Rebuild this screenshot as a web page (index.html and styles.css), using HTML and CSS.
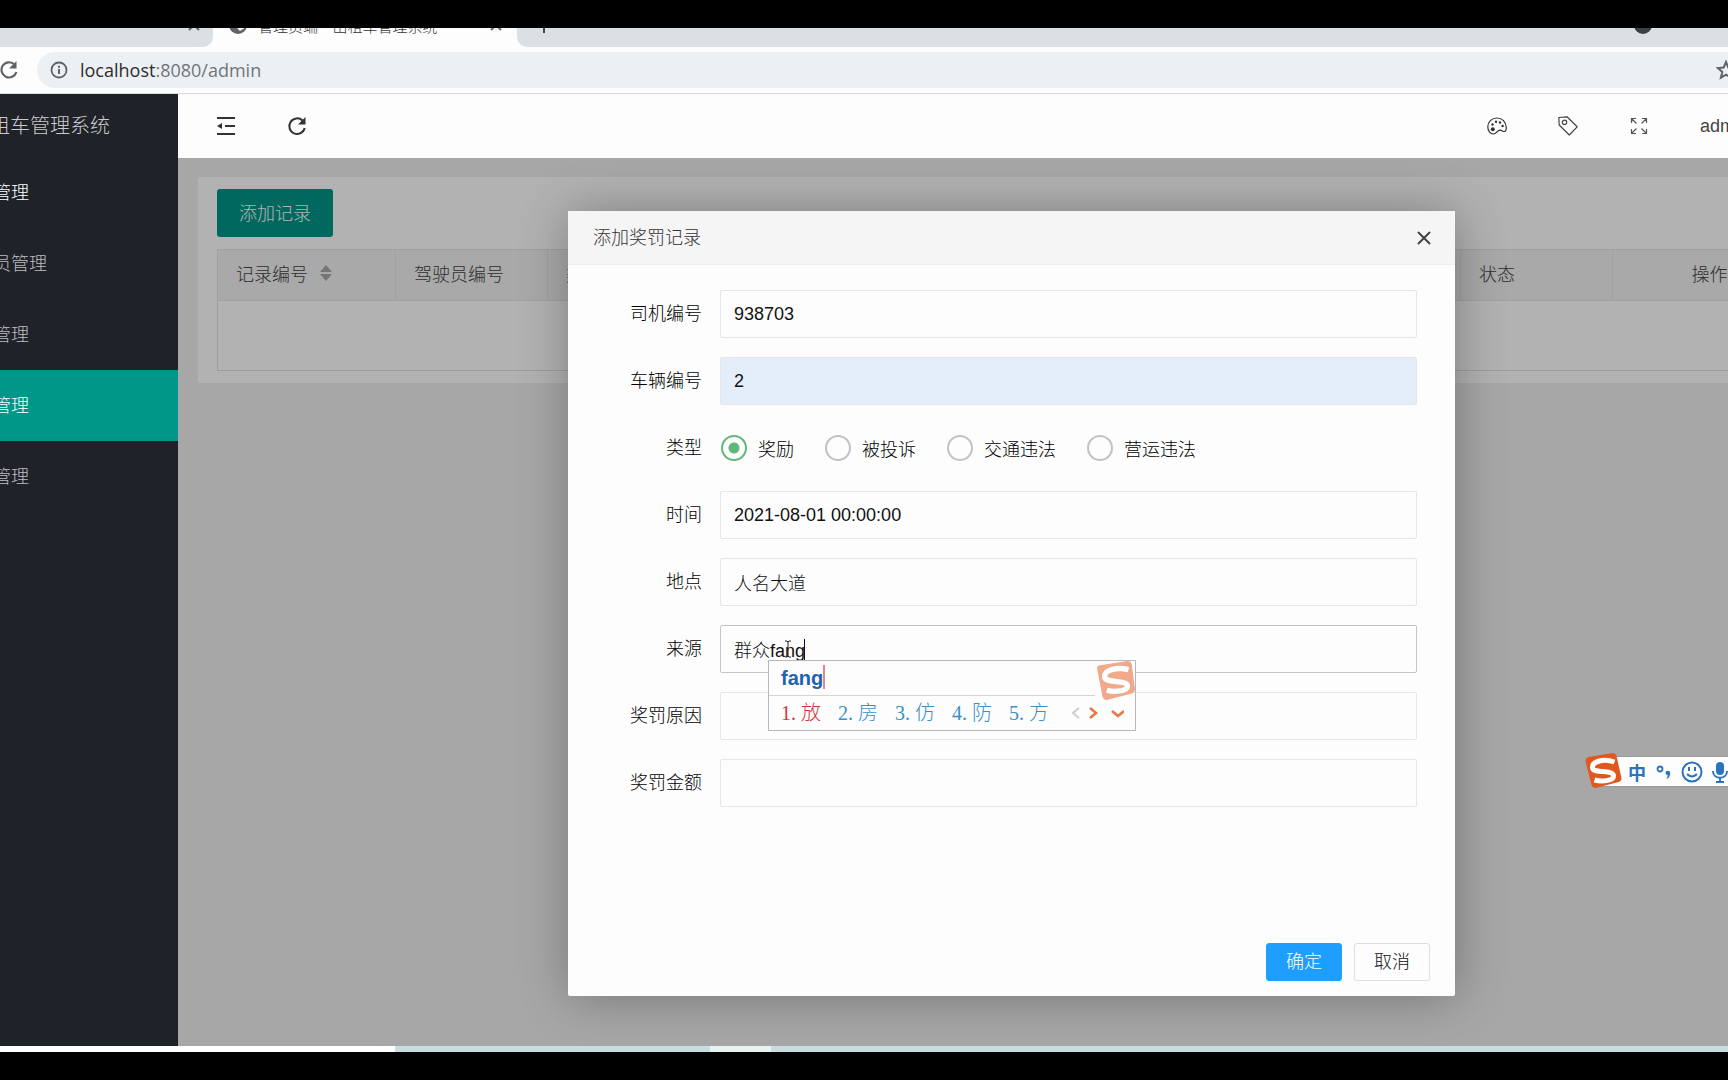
FILE: index.html
```html
<!DOCTYPE html>
<html lang="zh-CN">
<head>
<meta charset="utf-8">
<title>出租车管理系统</title>
<link rel="stylesheet" href="styles.css">
</head>
<body>
<div class="screen">
  <div class="tabstrip">
    <div class="tab tab-idle"><svg class="tab-x" viewBox="0 0 12 12"><path d="M1 1l10 10M11 1L1 11"/></svg></div>
    <div class="tab tab-current">
      <svg class="globe" viewBox="0 0 18 18"><circle cx="9" cy="9" r="9" fill="#5f6368"/><path d="M9 3l1 4 5 1 2 3-6 4-2-2-2-4z" fill="#fdfdfd"/></svg>
      <span class="tab-title">管理员端 – 出租车管理系统</span>
      <svg class="tab-x" viewBox="0 0 12 12"><path d="M1 1l10 10M11 1L1 11"/></svg>
    </div>
    <div class="tab tab-rest">
      <svg class="plus" viewBox="0 0 14 14"><path d="M7 0v14M0 7h14"/></svg>
      <span class="profile"></span>
    </div>
  </div>
  <div class="toolbar">
    <svg class="reload" viewBox="0 0 20 20"><path d="M15.5 4.5A7.600 7.600 0 1 0 17.400 12" fill="none" stroke="#5f6368" stroke-width="2.200"/><path d="M17.500 1v7.500H10z" fill="#5f6368"/></svg>
    <div class="omnibox">
      <svg class="info" viewBox="0 0 18 18"><circle cx="9" cy="9" r="7.500" fill="none" stroke="#5f6368" stroke-width="1.800"/><path d="M9 8v5M9 4.700v2" stroke="#5f6368" stroke-width="2"/></svg>
      <span class="url"><span class="host">localhost</span>:8080/admin</span>
      <svg class="star" viewBox="0 0 20 20"><path d="M10 2l2.300 5.500 5.900.5-4.500 3.900 1.400 5.800L10 14.600l-5.100 3.100 1.400-5.800L1.800 8l5.900-.5z"/></svg>
    </div>
  </div>
  <div class="app">
    <nav class="side">
      <div class="brand">租车管理系统</div>
      <a class="nav-item strong" href="#">管理</a>
      <a class="nav-item" href="#">员管理</a>
      <a class="nav-item" href="#">管理</a>
      <a class="nav-item current" href="#">管理</a>
      <a class="nav-item" href="#">管理</a>
    </nav>
    <div class="content">
      <header class="head">
        <button class="head-btn" aria-label="menu"><svg viewBox="0 0 20 20"><path d="M1 2h18M9 10h10M1 18h18" stroke="#333" stroke-width="2"/><path d="M1 10l5-3v6z" fill="#333"/></svg></button>
        <button class="head-btn" aria-label="refresh"><svg viewBox="0 0 20 20"><path d="M15.500 4.500A7.800 7.800 0 1 0 17.700 12" fill="none" stroke="#333" stroke-width="2"/><path d="M18.500 1v7.500H11z" fill="#333"/></svg></button>
        <span class="grow"></span>
        <button class="head-btn" aria-label="theme"><svg viewBox="0 0 20 20"><path d="M10 2C4.500 2 .8 6 .8 10.800c0 4 2.400 7.200 5.700 7.200 3.200 0 3.300-3.800 6.700-3.800 2 0 2.300 1.300 3.900 1.300 1.700 0 2.300-2 2.200-4.200C19 6 15.200 2 10 2z" fill="none" stroke="#333" stroke-width="1.200"/><circle cx="5.800" cy="13.300" r="2" fill="#333"/><g fill="#333"><circle cx="5.500" cy="8.500" r="1.200"/><circle cx="9" cy="5.800" r="1.200"/><circle cx="13" cy="6.500" r="1.200"/><circle cx="15.600" cy="10" r="1.200"/></g></svg></button>
        <button class="head-btn" aria-label="note"><svg viewBox="0 0 20 20"><path d="M.8 1.500L9 .8l10.200 10L11.300 19 1.200 9z" fill="none" stroke="#444" stroke-width="1.200" stroke-linejoin="round"/><circle cx="6.500" cy="6.300" r="2.200" fill="none" stroke="#444" stroke-width="1.200"/></svg></button>
        <button class="head-btn" aria-label="fullscreen"><svg viewBox="0 0 20 20" fill="none" stroke="#555" stroke-width="1.200"><path d="M2.500 7V2.500H7M2.500 2.500l5 5M13 2.500h4.500V7M17.500 2.500l-5 5M2.500 13v4.500H7M2.500 17.500l5-5M17.500 13v4.500H13M17.500 17.500l-5-5"/></svg></button>
        <a class="user" href="#">admin</a>
      </header>
      <main class="stage">
        <section class="card">
          <button class="add">添加记录</button>
          <table class="grid">
            <colgroup><col class="c-id"><col class="c-n"><col class="c-n"><col><col class="c-n"><col class="c-op"></colgroup>
            <thead><tr>
              <th><span class="sortable">记录编号<svg class="sort" viewBox="0 0 12 16"><path d="M0 7l6-7 6 7zM0 9l6 7 6-7z"/></svg></span></th>
              <th>驾驶员编号</th><th>类型</th><th></th><th>状态</th><th class="mid">操作</th>
            </tr></thead>
            <tbody><tr><td colspan="6"></td></tr></tbody>
          </table>
        </section>
        <div class="shade">
          <form class="dialog" role="dialog" aria-label="添加奖罚记录">
            <div class="dialog-head"><span>添加奖罚记录</span>
              <button type="button" class="close" aria-label="close"><svg viewBox="0 0 16 16"><path d="M2 2l12 12M14 2L2 14"/></svg></button></div>
            <div class="fields">
              <div class="field"><label for="driver">司机编号</label><input class="text" id="driver" value="938703"></div>
              <div class="field"><label for="car">车辆编号</label><input class="text filled" id="car" value="2"></div>
              <div class="field"><span class="label">类型</span>
                <div class="radios">
                  <label class="opt"><input type="radio" name="kind" checked>奖励</label>
                  <label class="opt"><input type="radio" name="kind">被投诉</label>
                  <label class="opt"><input type="radio" name="kind">交通违法</label>
                  <label class="opt"><input type="radio" name="kind">营运违法</label>
                </div></div>
              <div class="field"><label for="time">时间</label><input class="text" id="time" value="2021-08-01 00:00:00"></div>
              <div class="field"><label for="place">地点</label><input class="text" id="place" value="人名大道"></div>
              <div class="field"><label for="source">来源</label>
                <div class="typing"><input class="text focused" id="source" value="群众fang">
                  <span class="caret"></span>
                  <svg class="ibeam" viewBox="0 0 8 18"><path d="M1 1h2l1 1 1-1h2M4 2v14M1 17h2l1-1 1 1h2"/></svg>
                  <div class="ime">
                    <div class="ime-input"><span class="ime-text">fang</span></div>
                    <div class="ime-list">
                      <span class="cand first"><span class="num">1.</span>放</span><span class="cand"><span class="num">2.</span>房</span><span class="cand"><span class="num">3.</span>仿</span><span class="cand"><span class="num">4.</span>防</span><span class="cand"><span class="num">5.</span>方</span>
                      <svg class="arrows" viewBox="0 0 54 14" fill="none" stroke-width="2.600"><path d="M9 2L3 7l6 5" stroke="#ccc" stroke-width="2"/><path d="M20 2l6 5-6 5M42 5l6 5 6-5" stroke="#e27a45"/></svg>
                    </div>
                    <svg class="ime-logo" viewBox="0 0 36 36"><path d="M1 7Q1 4 4 4L29 0q3 0 4 3l3 23q0 3-3 4L10 36q-3 0-4-3z" fill="#f0a98b"/><path d="M30 8C18 5 7 9 8 15c1 6 21 2 21 8 0 5-12 6-19 4" fill="none" stroke="#fff" stroke-width="5"/></svg>
                  </div>
                </div></div>
              <div class="field"><label for="reason">奖罚原因</label><input class="text" id="reason"></div>
              <div class="field"><label for="amount">奖罚金额</label><input class="text" id="amount"></div>
            </div>
            <div class="actions"><button type="button" class="btn primary">确定</button><button type="button" class="btn">取消</button></div>
          </form>
        </div>
        <div class="langbar">
          <svg class="lang-logo" viewBox="0 0 36 36"><path d="M0 8Q0 5 3 4L27 0q3 0 4 3l5 22q0 3-3 4L10 35q-3 0-4-3z" fill="#e2571e"/><path d="M29 9C17 5 6 9 7 15c1 6 21 1 21 8 0 5-12 6-19 4" fill="none" stroke="#fff" stroke-width="5"/></svg>
          <span class="zh">中</span>
          <svg class="punct" viewBox="0 0 16 16"><circle cx="4" cy="5" r="2.500" fill="none" stroke="#2b74bd" stroke-width="1.800"/><path d="M9.500 9a2.300 2.300 0 1 1 4.700 0c0 3-1.500 5.500-4 6 1-1.200 1.500-2.500 1.500-4C10.500 11 9.500 10 9.500 9z" fill="#2b74bd"/></svg>
          <svg class="smile" viewBox="0 0 22 22" fill="none" stroke="#2b74bd" stroke-width="2"><circle cx="11" cy="11" r="9.500"/><path d="M8 6v4M14 6v4M6 13q5 5 10 0"/></svg>
          <svg class="mic" viewBox="0 0 16 22"><rect x="4" y="1" width="8" height="13" rx="4" fill="#2b74bd"/><path d="M1 10c0 9 14 9 14 0M8 17v4M4 21h8" fill="none" stroke="#2b74bd" stroke-width="2"/></svg>
        </div>
      </main>
    </div>
  </div>
  <div class="taskbar"><span class="task-search"></span><span class="task-gap"></span><span class="task-on"></span></div>
</div>
</body>
</html>
```
FILE: styles.css
```css
* { box-sizing: border-box; }
body {
  margin: 0;
  background: #000;
  color: #000;
  font-family: "Liberation Sans", "Noto Sans CJK SC", sans-serif;
  font-size: 18px;
  font-weight: 300;
}
button, input { font: inherit; color: inherit; margin: 0; }
svg { display: block; flex: none; }
.screen {
  display: flex;
  flex-direction: column;
  height: 100vh;
  padding: 28px 0;
  overflow: hidden;
}

/* browser frame */
.tabstrip { display: flex; height: 19px; overflow: hidden; background: #fdfdfd; }
.tab { display: flex; height: 19px; align-items: flex-start; overflow: hidden; }
.tab-idle { width: 213px; background: #dbe0e5; border-bottom-right-radius: 10px; justify-content: flex-end; padding-right: 13px; }
.tab-current { width: 304px; padding: 0 15px 0 16px; gap: 11px; }
.tab-rest { flex: 1; background: #dbe0e5; border-bottom-left-radius: 10px; padding-left: 20px; justify-content: space-between; }
.tab-x { width: 12px; height: 12px; margin-top: -9px; fill: none; stroke: #5f6368; stroke-width: 2; }
.tab-current .tab-x { margin-left: auto; }
.globe { width: 18px; height: 18px; margin-top: -12px; }
.tab-title { font-family: "Noto Sans CJK SC", sans-serif; font-size: 15px; line-height: 20px; margin-top: -12px; color: #333; white-space: pre; }
.plus { width: 14px; height: 14px; margin-top: -9px; fill: none; stroke: #444; stroke-width: 2; }
.profile { width: 18px; height: 18px; margin: -12px 76px 0 0; border-radius: 50%; background: #3c4046; }
.toolbar { display: flex; align-items: center; height: 47px; padding-bottom: 1px; gap: 18px; background: #fdfdfd; border-bottom: 1px solid #d9dadd; }
.reload { width: 20px; height: 20px; margin-left: -1px; }
.omnibox { flex: 1; display: flex; align-items: center; height: 36px; padding-left: 13px; background: #edf0f2; border-radius: 18px 0 0 18px; overflow: hidden; }
.info { width: 18px; height: 18px; margin-right: 12px; }
.url { flex: 1; font-family: "Open Sans", sans-serif; font-size: 18px; font-weight: 400; color: #70757a; }
.host { color: #2a2d31; }
.star { width: 20px; height: 20px; margin-right: -8px; fill: none; stroke: #5f6368; stroke-width: 2; }

/* application */
.app { flex: 1; display: flex; min-height: 0; }
.side { width: 178px; background: #20222a; overflow: hidden; }
.brand { height: 63px; line-height: 64px; font-size: 20px; margin-left: -10px; color: #ccc; }
.nav-item { display: block; height: 71px; line-height: 72px; text-indent: -7px; color: #bcbdbf; text-decoration: none; }
.nav-item.strong { color: #fff; }
.nav-item.current { background: #009688; color: #fff; }
.content { flex: 1; display: flex; flex-direction: column; min-width: 0; overflow: hidden; }
.head { display: flex; align-items: center; height: 64px; padding-left: 12px; background: #fdfdfd; }
.head-btn { display: flex; align-items: center; justify-content: center; width: 71px; height: 62px; padding: 0; border: 0; background: none; }
.head-btn svg { width: 20px; height: 20px; }
.grow { flex: 1; }
.user { width: 54px; padding-left: 26px; color: #444; text-decoration: none; font-weight: 400; }
.stage { position: relative; flex: 1; background: #f0f0f0; padding: 19px 0 0 20px; overflow: hidden; }
.card { height: 206px; padding: 12px 0 0 19px; background: #fff; border-radius: 3px 0 0 3px; }
.add { display: block; width: 116px; height: 48px; padding: 0 0 3px; border: 0; border-radius: 3px; background: #009688; color: #fff; }
.grid { width: 1590px; margin-top: 12px; table-layout: fixed; border-collapse: collapse; border: 1px solid #e0e0e0; }
.c-id { width: 178px; }
.c-n { width: 152px; }
.c-op { width: 194px; }
.grid th { height: 51px; padding: 0 18px 4px; text-align: left; font-weight: 300; color: #444; background: #f2f2f2; border: 1px solid #e6e6e6; white-space: nowrap; }
.grid .mid { text-align: center; }
.grid td { height: 70px; padding: 0; }
.sortable { display: flex; align-items: center; gap: 12px; }
.sort { width: 12px; height: 16px; fill: #a8a8a8; }

/* dialog */
.shade { position: absolute; inset: 0; padding: 53px 273px 50px 390px; background: rgba(0, 0, 0, .3); }
.dialog { display: flex; flex-direction: column; height: 100%; background: #fdfdfd; border-radius: 2px; box-shadow: 1px 1px 50px rgba(0, 0, 0, .3); }
.dialog-head { display: flex; align-items: center; justify-content: space-between; height: 54px; padding: 0 23px 3px 25px; background: #f5f5f6; border-bottom: 1px solid #eee; color: #333; }
.close { padding: 3px 0 0; border: 0; background: none; }
.close svg { width: 16px; height: 16px; fill: none; stroke: #444; stroke-width: 2; }
.fields { flex: 1; display: flex; flex-direction: column; gap: 19px; padding: 25px 38px 0 0; }
.field { display: flex; align-items: center; height: 48px; }
.field > label, .label { width: 152px; padding: 0 18px 4px 0; text-align: right; }
.text { flex: 1; width: 100%; height: 48px; padding: 0 13px; border: 1px solid #e6e6e6; border-radius: 2px; background: #fdfdfd; color: #111; outline: 0; }
.filled { background: #e4eefb; }
.focused { border-color: #c4c4c4; }
.radios { display: flex; gap: 31px; padding-left: 1px; }
.opt { display: flex; align-items: center; gap: 11px; }
.opt input { appearance: none; width: 26px; height: 26px; border: 2px solid #c2c2c2; border-radius: 50%; }
.opt input:checked { border-color: #5fb878; background: radial-gradient(circle, #5fb878 5px, #fdfdfd 6px); }
.actions { display: flex; justify-content: flex-end; gap: 12px; padding: 0 25px 15px; }
.btn { width: 76px; height: 38px; padding: 0 0 4px; border: 1px solid #dedede; border-radius: 3px; background: #fdfdfd; color: #111; }
.primary { border-color: #1e9fff; background: #1e9fff; color: #fff; }

/* input method window */
.typing { position: relative; flex: 1; display: flex; }
.caret { position: absolute; left: 84px; top: 14px; width: 1px; height: 21px; background: #111; }
.ibeam { position: absolute; left: 64px; top: 15px; width: 8px; height: 18px; fill: none; stroke: #222; }
.ime { position: absolute; z-index: 1; left: 48px; top: 35px; width: 368px; height: 71px; background: #fdfdfd; border: 1px solid #b5b8bd; }
.ime-input { height: 35px; margin-right: 40px; padding: 4px 12px; border-bottom: 1px solid #d5d5d5; }
.ime-text { display: inline-block; height: 24px; line-height: 26px; font-size: 20px; font-weight: 700; color: #1f62b3; border-right: 2px solid #e08a8a; }
.ime-list { display: flex; align-items: center; gap: 17px; height: 34px; padding-left: 12px; font-family: "Liberation Serif", "Noto Sans CJK SC", serif; font-size: 20px; color: #3b8fc6; }
.cand { display: flex; line-height: 28px; }
.num { width: 20px; }
.first { color: #d8323c; }
.arrows { width: 54px; height: 14px; margin-left: 4px; }
.ime-logo { position: absolute; right: 0; top: 0; width: 39px; height: 39px; }

/* language bar */
.langbar { position: absolute; right: 0; top: 598px; width: 128px; height: 31px; display: flex; align-items: center; padding-left: 27px; background: #fdfdfd; border: 1px solid #999; border-right: 0; color: #2b74bd; }
.lang-logo { position: absolute; left: -16px; top: -4px; width: 37px; height: 36px; }
.zh { font-family: "Noto Sans CJK SC", sans-serif; font-weight: 700; line-height: 24px; margin-right: 10px; }
.punct { width: 16px; height: 16px; margin-right: 9px; }
.smile { width: 22px; height: 22px; margin-right: 9px; }
.mic { width: 16px; height: 22px; }

.taskbar { display: flex; height: 6px; background: #c9dce1; }
.task-search { width: 395px; background: #fff; }
.task-gap { width: 315px; }
.task-on { width: 61px; background: #e6f3f0; }
```
